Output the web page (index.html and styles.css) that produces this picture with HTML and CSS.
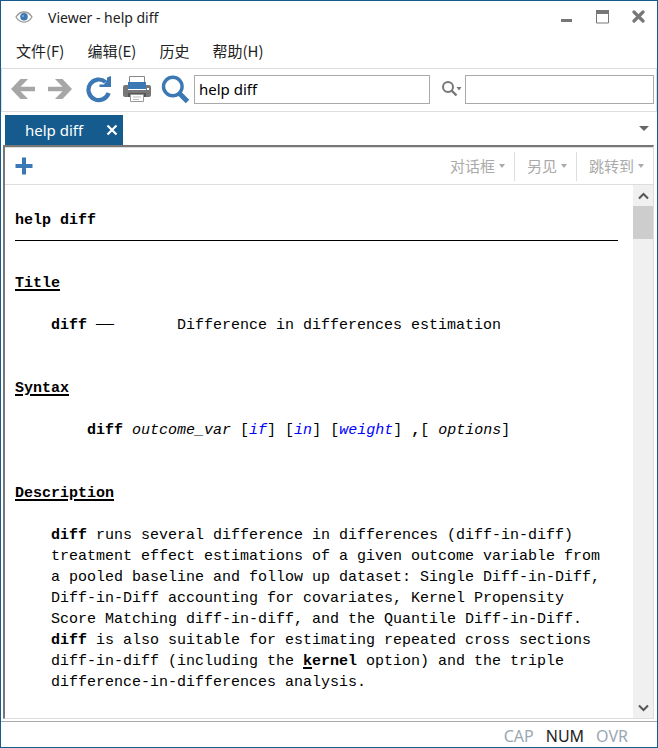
FILE: index.html
```html
<!DOCTYPE html>
<html lang="zh-CN">
<head>
    <meta charset="UTF-8">
    <meta name="viewport" content="width=device-width, initial-scale=1.0">
    <title>Viewer - help diff</title>
    <link rel="stylesheet" href="styles.css">
</head>
<body>
    <div class="window">
        <header class="titlebar">
            <svg class="eye" width="18" height="12" viewBox="0 0 18 12">
                <path d="M1 6C5-.7 13-.7 17 6C13 12.700 5 12.700 1 6Z" fill="#fff" stroke="#9a9a9a" stroke-width="1.300"/>
                <circle cx="9" cy="5.800" r="3.800" fill="#3c78b4"/>
                <circle cx="8" cy="5" r="1" fill="#8db4d8"/>
            </svg>
            <h1>Viewer - help diff</h1>
            <div class="window-buttons">
                <button type="button" aria-label="Minimize">
                    <svg width="14" height="14" viewBox="0 0 14 14"><path d="M1 9h11v3H1z" fill="#777"/></svg>
                </button>
                <button type="button" aria-label="Maximize">
                    <svg width="14" height="14" viewBox="0 0 14 14"><path d="M.5 1v12h12V1z" fill="#fff" stroke="#777"/><path d="M0 0h13v4H0z" fill="#777"/></svg>
                </button>
                <button type="button" aria-label="Close">
                    <svg width="14" height="14" viewBox="0 0 14 14"><path d="M2 2l9 9M11 2L2 11" stroke="#777" stroke-width="3.200" stroke-linecap="round"/></svg>
                </button>
            </div>
        </header>

        <nav class="menubar">
            <button type="button">文件(F)</button>
            <button type="button">编辑(E)</button>
            <button type="button">历史</button>
            <button type="button">帮助(H)</button>
        </nav>

        <div class="toolbar">
            <div class="tools">
                <button type="button" aria-label="Back">
                    <svg width="24" height="22" viewBox="0 0 24 22"><path d="M0 11L9.500 1H17L9.500 8.800H24v4.400H9.500L17 21H9.500z" fill="#a6a6a6"/></svg>
                </button>
                <button type="button" aria-label="Forward">
                    <svg width="24" height="22" viewBox="0 0 24 22"><path d="M24 11L14.500 1H7l7.500 7.800H0v4.400h14.500L7 21h7.500z" fill="#a6a6a6"/></svg>
                </button>
            </div>
            <button type="button" class="refresh" aria-label="Refresh">
                <svg width="26" height="28" viewBox="0 0 26 28"><path d="M19.500 7A10.300 10.300 0 1 0 22.600 18" fill="none" stroke="#3c78b4" stroke-width="4.200"/><path d="M25 1v11H13.500V9.500H18L21 5V2.500z" fill="#3c78b4"/></svg>
            </button>
            <button type="button" class="print" aria-label="Print">
                <svg width="28" height="28" viewBox="0 0 28 28">
                    <path d="M6.500 1.500h15V8h-15z" fill="#fff" stroke="#888"/>
                    <path d="M2 10h3v5h18v-5h3q2 0 2 2v8q0 2-2 2H2q-2 0-2-2v-8q0-2 2-2z" fill="#777"/>
                    <path d="M5 7h18v7H5z" fill="#3c78b4"/>
                    <path d="M24 13h2v2h-2z" fill="#fff"/>
                    <path d="M5 18h18v4H5z" fill="#555"/>
                    <path d="M7.500 19.500h13v7h-13z" fill="#fff" stroke="#999"/>
                    <path d="M10 22h8M10 24.500h6" stroke="#bbb"/>
                </svg>
            </button>
            <button type="button" class="find" aria-label="Find">
                <svg width="29" height="29" viewBox="0 0 29 29"><circle cx="11.800" cy="11.500" r="9.300" fill="none" stroke="#3c78b4" stroke-width="3.400"/><path d="M18.500 18.500l8 8" stroke="#3c78b4" stroke-width="5"/></svg>
            </button>
            <input class="command" type="text" value="help diff" aria-label="Command">
            <button type="button" class="search-menu" aria-label="Search options">
                <svg width="20" height="16" viewBox="0 0 20 16"><circle cx="6" cy="6" r="5" fill="none" stroke="#777" stroke-width="2"/><path d="M9.500 9.500l5 5" stroke="#777" stroke-width="2.400"/><path d="M14.500 6h5L17 9.500z" fill="#777"/></svg>
            </button>
            <input class="search" type="text" aria-label="Search">
        </div>

        <div class="tabs">
            <div class="tab">
                <a href="#doc">help diff</a>
                <button type="button" aria-label="Close tab">
                    <svg width="12" height="12" viewBox="0 0 12 12"><path d="M1.500 1.500l9 9M10.500 1.500l-9 9" stroke="#fff" stroke-width="2.200"/></svg>
                </button>
            </div>
            <button type="button" class="tab-list" aria-label="Tab list">
                <svg width="10" height="5" viewBox="0 0 10 5"><path d="M0 0h10L5 5z" fill="#666"/></svg>
            </button>
        </div>

        <main class="frame">
            <div class="docbar">
                <button type="button" class="add" aria-label="New tab">
                    <svg width="18" height="18" viewBox="0 0 18 18"><path d="M9 .5v17M.5 9h17" stroke="#3c78b4" stroke-width="4"/></svg>
                </button>
                <div class="jumps">
                    <button type="button">对话框<svg width="6" height="4" viewBox="0 0 6 4"><path d="M0 0h6L3 4z" fill="#aaa"/></svg></button>
                    <button type="button">另见<svg width="6" height="4" viewBox="0 0 6 4"><path d="M0 0h6L3 4z" fill="#aaa"/></svg></button>
                    <button type="button">跳转到<svg width="6" height="4" viewBox="0 0 6 4"><path d="M0 0h6L3 4z" fill="#aaa"/></svg></button>
                </div>
            </div>
            <div class="view">
                <article class="doc" id="doc">
                    <p><b>help diff</b></p>
                    <hr>
                    <h2>Title</h2>
                    <p class="title-line"><b>diff</b> ──       Difference in differences estimation</p>
                    <h2>Syntax</h2>
                    <p class="syntax"><b>diff</b> <i>outcome_var</i> [<a href="#if">if</a>] [<a href="#in">in</a>] [<a href="#weight">weight</a>] <b>,</b>[ <i>options</i>]</p>
                    <h2>Description</h2>
                    <p class="description"><b>diff</b> runs several difference in differences (diff-in-diff)
treatment effect estimations of a given outcome variable from
a pooled baseline and follow up dataset: Single Diff-in-Diff,
Diff-in-Diff accounting for covariates, Kernel Propensity
Score Matching diff-in-diff, and the Quantile Diff-in-Diff.
<b>diff</b> is also suitable for estimating repeated cross sections
diff-in-diff (including the <b><u>k</u>ernel</b> option) and the triple
difference-in-differences analysis.</p>
                </article>
                <div class="scrollbar">
                    <button type="button" aria-label="Scroll up">
                        <svg width="11" height="8" viewBox="0 0 11 8"><path d="M1 6.500L5.500 2L10 6.500" fill="none" stroke="#555" stroke-width="2"/></svg>
                    </button>
                    <div class="thumb"></div>
                    <button type="button" class="down" aria-label="Scroll down">
                        <svg width="11" height="8" viewBox="0 0 11 8"><path d="M1 1.500L5.500 6L10 1.500" fill="none" stroke="#555" stroke-width="2"/></svg>
                    </button>
                </div>
            </div>
        </main>

        <footer class="status">
            <span>CAP</span>
            <span class="on">NUM</span>
            <span>OVR</span>
        </footer>
    </div>
</body>
</html>
```
FILE: styles.css
```css
* {
    box-sizing: border-box;
}

body {
    margin: 0;
    font-family: "Noto Sans", "Noto Sans CJK SC", sans-serif;
    font-size: 14px;
    color: #222;
    background: #fff;
}

button {
    display: flex;
    align-items: center;
    justify-content: center;
    padding: 0;
    border: 0;
    background: none;
    font: inherit;
    color: inherit;
}

svg {
    display: block;
    flex: none;
}

.window {
    display: flex;
    flex-direction: column;
    height: 100vh;
    border: 1px solid #155b8d;
}

/* Title bar and menus */
.titlebar {
    display: flex;
    align-items: center;
    height: 32px;
    padding: 0 11px 0 14px;
}

.titlebar h1 {
    margin: 0 auto 0 15px;
    font-size: 14px;
    font-weight: 400;
}

.window-buttons {
    display: flex;
    gap: 22px;
}

.menubar {
    display: flex;
    gap: 23px;
    height: 35px;
    padding: 0 15px;
    font-family: "Noto Sans CJK SC", sans-serif;
    font-size: 15px;
}

/* Toolbar */
.toolbar {
    display: flex;
    align-items: center;
    height: 44px;
    padding: 0 2px 2px 9px;
    border: 1px solid #ddd;
}

.tools {
    display: flex;
    gap: 13px;
}

.refresh {
    margin-left: 14px;
}

.print {
    margin-left: 11px;
}

.find {
    margin: 0 4px 0 10px;
}

.toolbar input {
    min-width: 0;
    height: 29px;
    padding: 0 4px;
    border: 1px solid #aaa;
    font-family: inherit;
    font-size: 15px;
    color: #000;
}

.command {
    flex: 237;
}

.search {
    flex: 188;
}

.search-menu {
    margin: 0 3px 0 12px;
}

/* Tabs */
.tabs {
    display: flex;
    justify-content: space-between;
    height: 33px;
    padding: 3px 8px 0 4px;
}

.tab {
    display: flex;
    align-items: center;
    gap: 23px;
    padding: 0 5px 0 20px;
    background: #155b8d;
}

.tab a {
    color: #fff;
    font-size: 15px;
    text-decoration: none;
}

.tab-list {
    height: 26px;
}

/* Document frame */
.frame {
    display: flex;
    flex: 1;
    flex-direction: column;
    min-height: 0;
    margin: 0 3px 2px 2px;
    border: 1px solid #ddd;
    border-top: 2px solid #777;
    border-left: 2px solid #777;
}

.docbar {
    display: flex;
    justify-content: space-between;
    height: 38px;
    padding: 0 0 0 10px;
    border-top: 1px solid #ddd;
    border-bottom: 1px solid #ddd;
}

.jumps {
    display: flex;
    padding: 4px 0 3px;
    font-family: "Noto Sans CJK SC", sans-serif;
    font-size: 15px;
    color: #aaa;
}

.jumps button {
    gap: 4px;
    padding: 0 9px 2px 12px;
    border-right: 1px solid #ddd;
}

.jumps button:last-child {
    border-right: 0;
}

.view {
    display: flex;
    flex: 1;
    min-height: 0;
}

.doc {
    flex: 1;
    overflow: hidden;
    padding: 25px 15px 0 10px;
    font-family: "Liberation Mono", monospace;
    font-size: 15px;
    line-height: 21px;
    color: #000;
}

.doc p {
    margin: 0;
    white-space: pre;
}

.doc hr {
    height: 1px;
    margin: 9px 0 32px;
    border: 0;
    background: #000;
}

.doc h2 {
    margin: 0 0 21px;
    font-size: 15px;
    text-decoration: underline 2px;
    text-underline-offset: 2px;
}

.doc p + h2 {
    margin-top: 42px;
}

.doc a {
    color: #00f;
    font-style: italic;
    text-decoration: none;
}

.doc u {
    text-decoration: underline 2px;
    text-underline-offset: 2px;
}

.doc .title-line,
.doc .description {
    padding-left: 36px;
}

.doc .syntax {
    padding-left: 72px;
}

.scrollbar {
    display: flex;
    flex-direction: column;
    width: 20px;
    background: #f0f0f0;
}

.scrollbar button {
    height: 21px;
}

.thumb {
    height: 33px;
    background: #cdcdcd;
}

.scrollbar .down {
    margin-top: auto;
}

/* Status bar */
.status {
    display: flex;
    align-items: center;
    justify-content: flex-end;
    gap: 12px;
    height: 26px;
    padding: 2px 29px 0 0;
    border-top: 1px solid #aaa;
    font-size: 16px;
    color: #9aa7b2;
}

.status .on {
    color: #222;
}
```
